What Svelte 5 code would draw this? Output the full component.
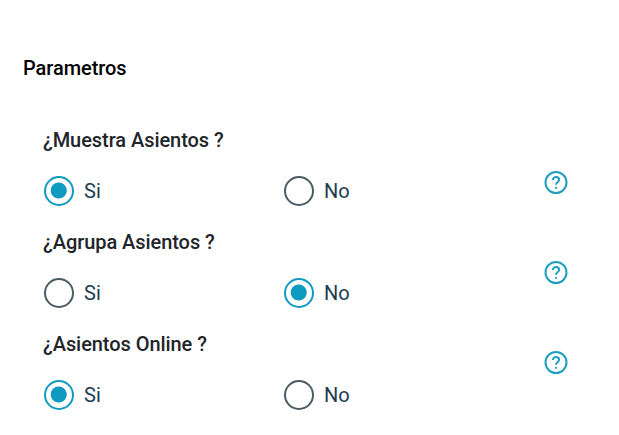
<script lang="ts">
	type Question = {
		id: string;
		label: string;
		value: string;
	};

	const options = ['Si', 'No'];

	let questions: Question[] = $state([
		{ id: 'muestra', label: '¿Muestra Asientos ?', value: 'Si' },
		{ id: 'agrupa', label: '¿Agrupa Asientos ?', value: 'No' },
		{ id: 'online', label: '¿Asientos Online ?', value: 'Si' }
	]);
</script>

<div class="container">
	<h2>Parametros</h2>
	<div class="content">
		<div class="questions">
			{#each questions as question}
				<div class="question">
					<h3>{question.label}</h3>
					<div class="options">
						{#each options as option}
							<label>
								<input type="radio" name={question.id} value={option} bind:group={question.value} />
								<span class="circle"></span>
								<span class="text">{option}</span>
							</label>
						{/each}
					</div>
				</div>
			{/each}
		</div>

		<!-- Help icons -->
		<div class="help">
			{#each questions as question}
				<button aria-label="Ayuda">
					<svg viewBox="0 0 24 24" width="24" height="24" fill="none">
						<circle cx="12" cy="11.5" r="10.5" />
						<path d="M8.9 9c0-1.8 1.3-2.9 3.1-2.9s3.1 1.1 3.1 2.7c0 2.2-3 2.4-3 5" />
						<circle class="dot" cx="12.1" cy="16.8" r="1.1" />
					</svg>
				</button>
			{/each}
		</div>
	</div>
</div>

<style>
	:global(body) {
		background: #fff;
	}

	.container {
		padding: 56px 24px 0;
		font-family: Roboto, sans-serif;
		font-size: 20px;
		line-height: 24px;
	}

	h2,
	h3 {
		margin: 0 0 0 -1px;
		font-size: 20px;
		font-weight: 500;
		line-height: 24px;
		letter-spacing: -0.06px;
	}

	h2 {
		color: #000;
	}

	h3 {
		color: #212529;
	}

	.content {
		display: flex;
		margin-top: 48px;
		padding-left: 20px;
	}

	.questions {
		width: 480px;
	}

	.question {
		height: 102px;
	}

	.options {
		display: grid;
		grid-template-columns: 1fr 1fr;
		margin-top: 24px;
	}

	label {
		display: flex;
		align-items: center;
		gap: 10px;
		color: #1d3c50;
		cursor: pointer;
	}

	input {
		position: absolute;
		opacity: 0;
	}

	.circle {
		box-sizing: border-box;
		width: 30px;
		height: 30px;
		border: 2px solid #4a5b63;
		border-radius: 50%;
	}

	input:checked + .circle {
		border-color: #0f9bc0;
		background: radial-gradient(circle at 12.7px 12.5px, #0f9bc0 7.6px, transparent 8.4px);
	}

	.help {
		display: flex;
		flex-direction: column;
		gap: 66px;
		padding-top: 43px;
		margin-left: 20px;
	}

	button {
		display: flex;
		padding: 0;
		border: none;
		background: none;
		cursor: pointer;
	}

	svg {
		stroke: #1f9fc0;
		stroke-width: 2;
	}

	.dot {
		fill: #1f9fc0;
		stroke: none;
	}
</style>
